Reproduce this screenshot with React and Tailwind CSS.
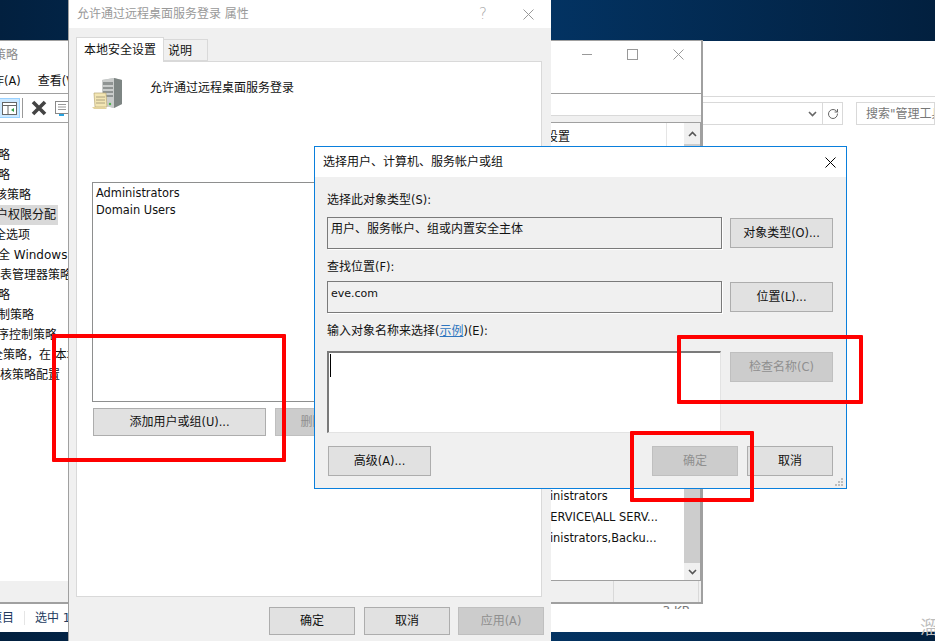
import React from "react";
import { RotateCw } from "lucide-react";

const treeRows = [
  { text: "略", cls: "ml-[-2px]" },
  { text: "略", cls: "ml-[-2px]" },
  { text: "核策略", cls: "ml-[-5px]" },
  { text: "户权限分配", cls: "ml-[-4px]", selected: true },
  { text: "全选项", cls: "ml-[-6px]" },
  { text: "全 Windows 防火墙", cls: "ml-[-2px]" },
  { text: "表管理器策略", cls: "ml-0" },
  { text: "略", cls: "ml-[-2px]" },
  { text: "制策略", cls: "ml-[-2px]" },
  { text: "序控制策略", cls: "ml-[-3px]" },
  { text: "全策略，在 本地计算机", cls: "ml-[-9px]" },
  { text: "核策略配置", cls: "ml-0" },
];

// latin runs sit a little smaller than the 12px han text in the reference
function En({ children }) {
  return <span className="text-[11.4px]">{children}</span>;
}

function CloseGlyph({ color = "#000", size = 11 }) {
  return (
    <svg width={size} height={size} viewBox="0 0 11 11">
      <path d="M0.5 0.5L10.5 10.5M10.5 0.5L0.5 10.5" stroke={color} strokeWidth="1" fill="none" />
    </svg>
  );
}

function Btn({ children, className = "", disabled = false }) {
  return (
    <div
      className={`flex items-center justify-center border shrink-0 ${
        disabled
          ? "bg-[#cccccc] border-[#bfbfbf] text-[#8f8f8f]"
          : "bg-[#e1e1e1] border-[#adadad] text-[#111]"
      } ${className}`}
    >
      <span>{children}</span>
    </div>
  );
}

function ServerIcon() {
  return (
    <svg width="32" height="34" viewBox="0 0 32 34">
      <path d="M10 3L22 1L30 3V27L22 31L10 28Z" fill="#b9bcbc" />
      <path d="M22 1L30 3V27L22 31Z" fill="#7d8583" />
      <path d="M10 3L22 1V31L10 28Z" fill="#c9cccb" />
      <path d="M11 5H21V8H11ZM11 10H21V12H11ZM11 14H21V16H11ZM11 18H21V20H11Z" fill="#8f9493" />
      <circle cx="18" cy="27" r="1.2" fill="#4fb24f" />
      <path d="M2 16H14L15 30H3Z" fill="#f3e6b4" stroke="#b8a775" strokeWidth="0.7" />
      <path d="M4 20H13M4 23H13M4 26H13" stroke="#9c9273" strokeWidth="0.8" />
      <path d="M0 30H13L15 32H2Z" fill="#e3d29c" />
    </svg>
  );
}

function ExplorerWindow() {
  return (
    <div className="absolute left-0 top-[41px] w-[935px] h-[591px] bg-white flex flex-col">
      <div className="h-[56px] border-b border-[#d9d9d9] shrink-0" />
      <div className="flex items-stretch h-[23px] mt-[5px] shrink-0">
        <div className="w-[843px] border border-[#d9d9d9] flex justify-end">
          <div className="w-[19px] flex items-center justify-center text-[#666]">
            <svg width="9" height="6" viewBox="0 0 9 6">
              <path d="M1 1L4.5 4.5L8 1" stroke="#666" strokeWidth="1.6" fill="none" />
            </svg>
          </div>
          <div className="w-[20px] border-l border-[#d9d9d9] flex items-center justify-center">
            <RotateCw size={12} color="#666" strokeWidth={2} />
          </div>
        </div>
        <div className="ml-[13px] flex-1 border border-[#d9d9d9] pl-[9px] pt-px flex items-center text-[#777] whitespace-nowrap overflow-hidden">
          搜索"管理工具"
        </div>
      </div>
      <div className="flex-1 min-h-0 flex justify-end pr-[245px]">
        <div className="mt-[480px] h-[4px] shrink-0 overflow-hidden text-[#777] leading-[12px]">3 KB</div>
      </div>
      <div className="h-[28px] flex items-center shrink-0 text-[#223a5e] whitespace-nowrap">
        <span className="ml-[-10px]">项目</span>
        <span className="ml-[10px] w-px h-[14px] bg-[#e5e5e5]" />
        <span className="ml-[10px]">选中 1 个项目</span>
      </div>
    </div>
  );
}

function MmcWindow() {
  return (
    <div className="absolute left-0 top-[40px] w-[703px] h-[564px] bg-white border-t border-[#a0a0a0] border-r-2 border-b-2 flex flex-col overflow-hidden">
      <div className="h-[28px] flex items-center shrink-0 relative">
        <span className="ml-[-30px] text-[#8a8a8a]">安全策略</span>
        <div className="ml-auto flex items-center text-[#999] -mt-[2px]">
          <div className="w-[10px] h-px bg-[#999] mr-[35px]" />
          <div className="w-[11px] h-[11px] border border-[#999] mr-[35px]" />
          <div className="mr-[17px]">
            <CloseGlyph color="#999" />
          </div>
        </div>
      </div>
      <div className="h-[24px] flex items-center shrink-0 whitespace-nowrap text-[#111]">
        <span className="ml-[-20px]">操作<En>(A)</En></span>
        <span className="ml-[17px]">查看<En>(V)</En></span>
      </div>
      <div className="h-[30px] border-t border-b border-[#a0a0a0] flex shrink-0">
        <div className="w-[550px] flex items-center">
          <div className="w-[20px] h-[20px] bg-[#cce8ff] border border-[#99d1ff] border-l-0 flex items-center justify-center">
            <svg width="15" height="13" viewBox="0 0 15 13">
              <rect x="0.5" y="0.5" width="14" height="12" fill="#fff" stroke="#666" />
              <path d="M1 3.5H14M6 4V12" stroke="#666" />
              <path d="M12 6L9 8L12 10Z" fill="#2f9e44" />
            </svg>
          </div>
          <div className="ml-[2px] w-px h-[20px] bg-[#999]" />
          <svg className="ml-[8px]" width="16" height="16" viewBox="0 0 16 16">
            <path d="M2 2L14 14M14 2L2 14" stroke="#444" strokeWidth="3.6" fill="none" />
          </svg>
          <svg className="ml-[8px]" width="14" height="15" viewBox="0 0 14 15">
            <rect x="0.5" y="0.5" width="13" height="12" fill="#fff" stroke="#888" />
            <path d="M3 3.5H11M3 6H11M3 8.5H11" stroke="#999" />
            <path d="M4 14H9" stroke="#29a3e0" strokeWidth="2" />
          </svg>
        </div>
        <div className="flex-1 flex flex-col">
          <div className="flex-1" />
          <div className="h-[7px] bg-[#f0f0f0] border-t border-[#d9d9d9]" />
        </div>
      </div>
      <div className="flex-1 flex min-h-0">
        <div className="w-[60px] pt-[22px] whitespace-nowrap text-[#111]">
          {treeRows.map((row, i) => (
            <div key={i} className={`h-[20px] leading-[20px] ${row.selected ? "bg-[#d9d9d9] w-[58px]" : ""}`}>
              <span className={`inline-block ${row.cls}`}>{row.text}</span>
            </div>
          ))}
        </div>
        <div className="ml-auto w-[202px] flex border-r border-[#a0a0a0] border-b whitespace-nowrap text-[#111]">
          <div className="flex-1 overflow-hidden">
            <div className="h-[24px] leading-[28px] pl-[23px] relative">
              安全设置
              <div className="absolute right-[17px] top-0 bottom-0 w-px bg-[#e5e5e5]" />
            </div>
            <div className="pt-[339px] pl-[25px]">
              <div className="h-[20px] leading-[20px]"><En>Administrators</En></div>
              <div className="h-[20px] leading-[20px] mt-[1px]"><En>NT SERVICE\ALL SERV...</En></div>
              <div className="h-[20px] leading-[20px] mt-[1px]"><En>Administrators,Backu...</En></div>
            </div>
          </div>
          <div className="w-[16px] flex flex-col shrink-0">
            <div className="h-[21px] bg-[#f0f0f0] flex items-center justify-center">
              <svg width="9" height="6" viewBox="0 0 9 6">
                <path d="M1 5L4.5 1.5L8 5" stroke="#555" strokeWidth="1.6" fill="none" />
              </svg>
            </div>
            <div className="flex-1 bg-[#cdcdcd]" />
            <div className="h-[17px] bg-[#f0f0f0] flex items-center justify-center">
              <svg width="9" height="6" viewBox="0 0 9 6">
                <path d="M1 1L4.5 4.5L8 1" stroke="#555" strokeWidth="1.6" fill="none" />
              </svg>
            </div>
          </div>
        </div>
      </div>
      <div className="h-[21px] bg-[#f0f0f0] flex justify-end shrink-0">
        <div className="w-[85px] border-l border-[#d9d9d9]" />
        <div className="w-[3px] border-l border-[#d9d9d9]" />
      </div>
    </div>
  );
}

function PropertiesDialog() {
  return (
    <div className="absolute left-[68px] top-0 w-[483px] h-[641px] bg-[#f0f0f0] border-l border-[#a0a0a0] flex flex-col">
      <div className="h-[28px] bg-white flex items-center shrink-0 pl-[8px] text-[#999] text-[12px]">
        <span>允许通过远程桌面服务登录 属性</span>
        <span className="ml-auto mr-[36px] text-[15px] font-light text-[#aaa]">?</span>
        <div className="mr-[17px]">
          <CloseGlyph color="#999" />
        </div>
      </div>
      <div className="pl-[7px] pt-[9px] flex items-end shrink-0 text-[#111]">
        <div className="w-[88px] h-[25px] -mb-px z-10 bg-white border border-[#d9d9d9] border-b-0 flex items-center justify-center">
          本地安全设置
        </div>
        <div className="w-[44px] h-[22px] border border-[#d9d9d9] border-l-0 flex items-center pl-[4px] pt-px">说明</div>
      </div>
      <div className="ml-[7px] w-[466px] h-[536px] bg-white border border-[#d9d9d9] pt-[15px] pl-[15px] shrink-0">
        <div className="flex h-[33px]">
          <ServerIcon />
          <span className="ml-[26px] mt-[2px] text-[#111]">允许通过远程桌面服务登录</span>
        </div>
        <div className="mt-[72px] w-[433px] h-[220px] border border-[#8e8f8f] pl-[3px] pt-[2px] text-[#111]">
          <div className="h-[17px] leading-[17px]"><En>Administrators</En></div>
          <div className="h-[17px] leading-[17px]"><En>Domain Users</En></div>
        </div>
        <div className="mt-[6px] ml-px flex gap-[9px]">
          <Btn className="w-[173px] h-[28px]">添加用户或组<En>(U)...</En></Btn>
          <Btn disabled className="w-[92px] h-[28px]">删除<En>(R)</En></Btn>
        </div>
      </div>
      <div className="mt-[10px] flex justify-end pr-[7px]">
        <Btn className="w-[86px] h-[28px]">确定</Btn>
        <Btn className="ml-[9px] w-[86px] h-[28px]">取消</Btn>
        <Btn disabled className="ml-[8px] w-[86px] h-[28px]">应用<En>(A)</En></Btn>
      </div>
    </div>
  );
}

function SelectDialog() {
  return (
    <div className="absolute left-[314px] top-[146px] w-[533px] h-[343px] border border-[#0a7fdc] bg-[#f0f0f0] flex flex-col text-[#111]">
      <div className="h-[30px] bg-white flex items-center justify-between pl-[8px] pr-[10px] shrink-0">
        <span>选择用户、计算机、服务帐户或组</span>
        <CloseGlyph />
      </div>
      <div className="pl-[12px] flex flex-col">
        <div className="mt-[15px] h-[16px] leading-[16px]">选择此对象类型<En>(S):</En></div>
        <div className="mt-[9px] flex">
          <div className="w-[395px] h-[32px] border border-[#7a7a7a] pl-[3px] leading-[23px] shadow-[1px_1px_0_#fff]">
            用户、服务帐户、组或内置安全主体
          </div>
          <Btn className="ml-[8px] mt-px w-[103px] h-[30px]">对象类型<En>(O)...</En></Btn>
        </div>
        <div className="mt-[10px] h-[16px] leading-[16px]">查找位置<En>(F):</En></div>
        <div className="mt-[6px] flex">
          <div className="w-[395px] h-[32px] border border-[#7a7a7a] pl-[3px] leading-[22px] shadow-[1px_1px_0_#fff]">
            <span className="text-[11px]">eve.com</span>
          </div>
          <Btn className="ml-[8px] mt-px w-[103px] h-[30px]">位置<En>(L)...</En></Btn>
        </div>
        <div className="mt-[10px] h-[16px] leading-[16px]">
          输入对象名称来选择<En>(</En><span className="text-[#2f76bf] underline">示例</span><En>)(E):</En>
        </div>
        <div className="mt-[12px] flex">
          <div className="w-[394px] h-[82px] bg-white border-t-2 border-l-2 border-r border-b border-t-[#7a7a7a] border-l-[#7a7a7a] border-r-[#e3e3e3] border-b-[#e3e3e3] pl-px pt-px">
            <div className="w-px h-[23px] bg-black" />
          </div>
          <Btn disabled className="ml-[9px] mt-px w-[103px] h-[30px]">检查名称<En>(C)</En></Btn>
        </div>
        <div className="mt-[13px] flex pl-px">
          <Btn className="w-[103px] h-[30px]">高级<En>(A)...</En></Btn>
          <Btn disabled className="ml-[221px] w-[86px] h-[30px]">确定</Btn>
          <Btn className="ml-[9px] w-[86px] h-[30px]">取消</Btn>
        </div>
      </div>
      <svg className="absolute right-[3px] bottom-[2px]" width="8" height="8" viewBox="0 0 8 8">
        <path d="M6 0h2v2H6zM3 3h2v2H3zM6 3h2v2H6zM0 6h2v2H0zM3 6h2v2H3zM6 6h2v2H6z" fill="#bdbdbd" />
      </svg>
    </div>
  );
}

export default function App() {
  return (
    <div
      className="relative w-[935px] h-[641px] overflow-hidden bg-gradient-to-r from-[#02203f] via-[#03376a] to-[#02203f] text-[12px]"
      style={{ fontFamily: '"DejaVu Sans","Noto Sans CJK SC",sans-serif' }}
    >
      <ExplorerWindow />
      <MmcWindow />
      <PropertiesDialog />
      <SelectDialog />

      {/* red annotation boxes */}
      <div className="absolute left-[52px] top-[334px] w-[234px] h-[128px] border-[4px] border-[#ff0000] rounded-[1px]" />
      <div className="absolute left-[677px] top-[335px] w-[186px] h-[69px] border-[4px] border-[#ff0000] rounded-[1px]" />
      <div className="absolute left-[630px] top-[431px] w-[124px] h-[71px] border-[4px] border-[#ff0000] rounded-[1px]" />

      <div className="absolute left-[920px] top-[614px] text-[18px] text-[#bdbdbd]">溜</div>
    </div>
  );
}
